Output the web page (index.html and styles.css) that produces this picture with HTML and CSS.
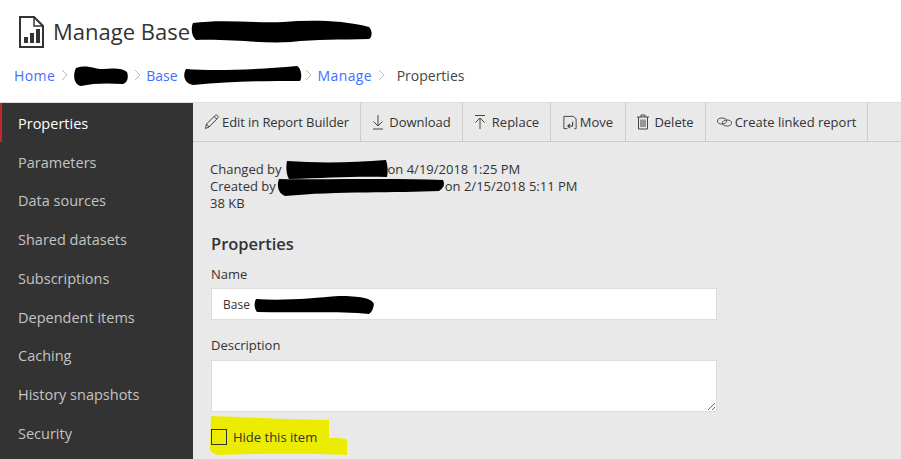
FILE: index.html
```html
<!DOCTYPE html>
<html lang="en">
<head>
    <meta charset="UTF-8">
    <title>Manage Base</title>
    <link rel="stylesheet" href="styles.css">
</head>

<body>
    <header class="page-header">
        <div class="title-row">
            <svg class="report-icon" width="25" height="32" viewBox="0 0 25 32" fill="none">
                <path d="M1 1H15L24 10V31H1Z" stroke="#333" stroke-width="2"/>
                <path d="M15 1V10H24" stroke="#333" stroke-width="1.5"/>
                <path d="M5 27V21H9V27ZM11 27V17H15V27ZM17 27V13H21V27Z" fill="#333"/>
            </svg>
            <h1>Manage Base</h1>
            <svg class="scribble" width="182" height="26" viewBox="0 0 182 26" preserveAspectRatio="none">
                <path d="M2 4C30 0 60 4 92 3C120 1 150 1 178 8C182 12 181 19 178 20C150 21 125 20 100 23C70 25 45 20 5 21C0 17 0 8 2 4Z"/>
            </svg>
        </div>
        <nav class="breadcrumb">
            <a href="#" class="crumb-wide">Home</a>
            <svg class="sep" width="7" height="10" viewBox="0 0 7 10" fill="none"><path d="M1 0L6 5L1 10"/></svg>
            <svg class="scribble" width="55" height="21" viewBox="0 0 55 21" preserveAspectRatio="none">
                <path d="M3 3C15 -1 20 4 30 4C40 3 50 3 54 7C56 13 54 18 50 19C35 18 20 18 8 21C0 19 0 9 3 3Z"/>
            </svg>
            <svg class="sep" width="7" height="10" viewBox="0 0 7 10" fill="none"><path d="M1 0L6 5L1 10"/></svg>
            <a href="#">Base</a>
            <svg class="scribble crumb-blob" width="119" height="19" viewBox="0 0 120 19" preserveAspectRatio="none">
                <path d="M3 3C30 5 70 4 115 0C120 3 120 12 118 15C85 15 50 15 10 19C0 17 0 8 3 3Z"/>
            </svg>
            <svg class="sep" width="7" height="10" viewBox="0 0 7 10" fill="none"><path d="M1 0L6 5L1 10"/></svg>
            <a href="#" class="crumb-wide">Manage</a>
            <svg class="sep" width="7" height="10" viewBox="0 0 7 10" fill="none"><path d="M1 0L6 5L1 10"/></svg>
            <span class="current">Properties</span>
        </nav>
    </header>

    <div class="layout">
        <aside class="sidebar">
            <a href="#" class="side-item active">Properties</a>
            <a href="#" class="side-item">Parameters</a>
            <a href="#" class="side-item">Data sources</a>
            <a href="#" class="side-item">Shared datasets</a>
            <a href="#" class="side-item">Subscriptions</a>
            <a href="#" class="side-item">Dependent items</a>
            <a href="#" class="side-item">Caching</a>
            <a href="#" class="side-item">History snapshots</a>
            <a href="#" class="side-item">Security</a>
        </aside>

        <main class="content">
            <div class="toolbar">
                <button type="button" class="tool tool-edit">
                    <svg width="15" height="16" viewBox="0 0 15 16" fill="none" stroke="#444">
                        <path d="M1.5 14.5L2.5 10L11 1.5C12 .8 13 1 13.8 2C14.4 3 14.2 3.6 13.5 4.3L5 13Z"/>
                        <path d="M2.5 10L5 13M10 2.5L13 5.2"/>
                    </svg>
                    Edit in Report Builder
                </button>
                <button type="button" class="tool tool-download">
                    <svg width="12" height="16" viewBox="0 0 12 16" fill="none" stroke="#444">
                        <path d="M6 1V12M1.5 7.5L6 12L10.5 7.5M1 15H11"/>
                    </svg>
                    Download
                </button>
                <button type="button" class="tool tool-replace">
                    <svg width="12" height="16" viewBox="0 0 12 16" fill="none" stroke="#444">
                        <path d="M1 1.500H11M6 15V4M1.500 8.500L6 4L10.500 8.500"/>
                    </svg>
                    Replace
                </button>
                <button type="button" class="tool tool-move">
                    <svg width="14" height="15" viewBox="0 0 16 16" fill="none" stroke="#333">
                        <path d="M5 15H1V1H12L15 4V15H13"/>
                        <path d="M11 7V12H6M8 9.500L5.500 12L8 14.500" stroke-width="1.200"/>
                    </svg>
                    Move
                </button>
                <button type="button" class="tool tool-delete">
                    <svg width="12" height="16" viewBox="0 0 12 16" fill="none" stroke="#444">
                        <path d="M0 3H12M4 3V1H8V3M1.500 3V15H10.500V3M4 5.500V13M6 5.500V13M8 5.500V13"/>
                    </svg>
                    Delete
                </button>
                <button type="button" class="tool tool-linked">
                    <svg width="15" height="10" viewBox="0 0 15 10" fill="none" stroke="#555">
                        <ellipse cx="5" cy="4" rx="4.500" ry="3"/>
                        <ellipse cx="10" cy="6" rx="4.500" ry="3"/>
                    </svg>
                    Create linked report
                </button>
            </div>

            <section class="details">
                <div class="meta">
                    <div class="meta-line">Changed by
                        <svg class="scribble blob-changed" width="102" height="19" viewBox="0 0 102 19" preserveAspectRatio="none">
                            <path d="M1 1C30 3 65 3 100 0C102 6 102 12 101 17C70 16 40 18 3 19C0 14 0 6 1 1Z"/>
                        </svg>
                        <span>on 4/19/2018 1:25 PM</span>
                    </div>
                    <div class="meta-line">Created by
                        <svg class="scribble blob-created" width="168" height="18" viewBox="0 0 168 18" preserveAspectRatio="none">
                            <path d="M2 1C50 2 110 0 166 2C168 6 167 10 162 13C120 15 60 13 8 18C0 15 0 6 2 1Z"/>
                        </svg>
                        <span>on 2/15/2018 5:11 PM</span>
                    </div>
                    <div>38 KB</div>
                </div>

                <h2>Properties</h2>

                <label class="field-label" for="item-name">Name</label>
                <div class="name-box" id="item-name">
                    Base
                    <svg class="scribble" width="120" height="18" viewBox="0 0 120 18" preserveAspectRatio="none">
                        <path d="M2 3C30 5 60 2 85 0C105 0 118 2 120 8C119 13 118 16 115 18C85 15 40 17 3 16C0 12 0 7 2 3Z"/>
                    </svg>
                </div>

                <label class="field-label desc-label" for="description">Description</label>
                <textarea class="desc-box" id="description"></textarea>

                <div class="hide-row">
                    <svg class="highlight" width="138" height="40" viewBox="0 0 138 40" preserveAspectRatio="none">
                        <path d="M1 0C30 1 60 3 119 4V22C125 22 135 22 137 24V39C110 38 60 37 12 39C5 39 1 37 0 33Z"/>
                    </svg>
                    <span class="hide-check"></span>
                    <span class="hide-text">Hide this item</span>
                </div>
            </section>
        </main>
    </div>
</body>

</html>
```

FILE: styles.css
```css
html,
body {
    height: 100%;
}

body {
    margin: 0;
    background-color: #fff;
    color: #333;
    font-family: 'Open Sans', sans-serif;
    font-size: 13px;
    display: flex;
    flex-direction: column;
    overflow: hidden;
}

a {
    text-decoration: none;
}

.scribble {
    fill: #000;
    flex: none;
    vertical-align: middle;
}

.page-header {
    height: 103px;
    flex: none;
    box-sizing: border-box;
    padding: 16px 0 0 14px;
    border-bottom: 1px solid #ddd;
}

.title-row {
    display: flex;
    align-items: center;
    height: 32px;
}

.report-icon {
    margin-left: 5px;
    margin-right: 9px;
}

h1 {
    margin: -2px 0 0;
    font-size: 22px;
    font-weight: 400;
    white-space: nowrap;
}

.title-row .scribble {
    margin-left: 1px;
}

.breadcrumb {
    display: flex;
    align-items: center;
    height: 22px;
    margin-top: 16px;
    font-size: 14px;
    white-space: nowrap;
}

.breadcrumb a {
    color: #3f6fff;
}

.breadcrumb .crumb-wide {
    letter-spacing: .4px;
}

.breadcrumb .crumb-blob {
    margin: 0 -2px 0 5px;
}

.breadcrumb .current {
    margin-left: 6.5px;
    color: #444;
}

.sep {
    flex: none;
    margin: 0 5.5px;
    stroke: #bbb;
}

.layout {
    flex: 1;
    display: flex;
    min-height: 0;
}

.sidebar {
    width: 193px;
    flex: none;
    background-color: #333;
}

.side-item {
    display: flex;
    align-items: center;
    height: 38.75px;
    box-sizing: border-box;
    padding: 2px 0 0 18px;
    color: #c4c4c4;
    font-size: 14.5px;
}

.side-item.active {
    color: #fff;
    padding-left: 16px;
    border-left: 2px solid #c4262e;
}

.content {
    flex: 1;
    background-color: #e9e9e9;
}

.toolbar {
    display: flex;
    height: 39px;
    box-sizing: border-box;
    border-bottom: 1px solid #ccc;
}

.tool {
    display: flex;
    align-items: center;
    justify-content: center;
    gap: 3px;
    height: 38px;
    padding: 0;
    border: none;
    border-right: 1px solid #ccc;
    background: none;
    color: #333;
    font-family: 'Open Sans', sans-serif;
    font-size: 13px;
    white-space: nowrap;
}

.tool-edit { width: 168px; letter-spacing: -.1px; }
.tool-download { width: 102px; gap: 5px; }
.tool-replace { width: 88px; gap: 6px; }
.tool-move { width: 75px; }
.tool-delete { width: 80px; gap: 5px; }
.tool-linked { width: 162px; }

.details {
    padding: 19px 0 0 18px;
}

.meta {
    margin-left: -1px;
    line-height: 17px;
}

.meta-line {
    display: flex;
    align-items: center;
    height: 17px;
    white-space: nowrap;
}

.blob-changed {
    margin-left: 4px;
}

.blob-created {
    margin-left: 1px;
}

h2 {
    margin: 21px 0 0;
    font-size: 16.5px;
    font-weight: 600;
    line-height: 22px;
}

.field-label {
    display: block;
    margin-top: 10px;
    line-height: 18px;
}

.desc-label {
    margin-top: 16px;
}

.name-box {
    display: flex;
    align-items: center;
    gap: 4px;
    width: 506px;
    height: 32px;
    margin-top: 5px;
    box-sizing: border-box;
    padding: 1px 0 0 11px;
    border: 1px solid #ddd;
    background-color: #fff;
    font-size: 12px;
}

.desc-box {
    display: block;
    width: 506px;
    height: 52px;
    margin: 6px 0 0;
    box-sizing: border-box;
    border: 1px solid #ddd;
    background-color: #fff;
}

.hide-row {
    position: relative;
    display: flex;
    align-items: center;
    gap: 6px;
    height: 18px;
    margin-top: 16px;
}

.highlight {
    position: absolute;
    left: -1px;
    top: -12px;
    fill: #ecec00;
}

.hide-check {
    position: relative;
    width: 16px;
    height: 16px;
    border: 1px solid #333;
    box-sizing: border-box;
}

.hide-text {
    position: relative;
    color: #333;
}
```
